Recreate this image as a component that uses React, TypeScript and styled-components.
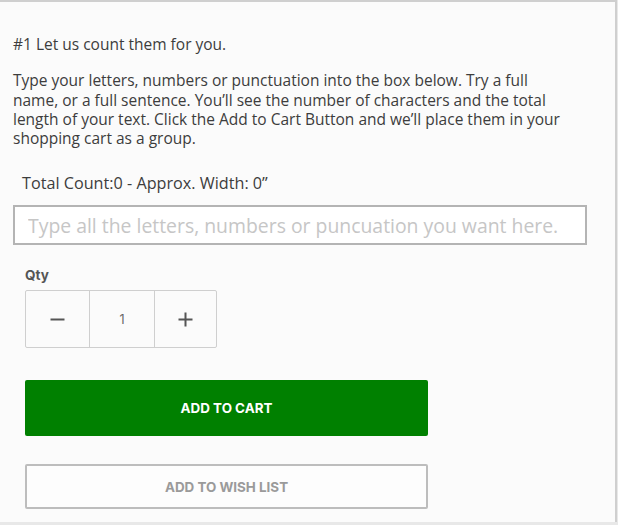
import * as React from "react";
import styled, { createGlobalStyle } from "styled-components";

const GlobalStyle = createGlobalStyle`
  html, body {
    margin: 0;
    padding: 0;
    background: #e8e8e8;
  }
  * {
    box-sizing: border-box;
  }
`;

const Panel = styled.div`
  background: #fbfbfb;
  border-right: 2px solid #cfcfcf;
  border-top: 2px solid #cfcfcf;
  display: flex;
  flex-direction: column;
  font-family: "Open Sans", "Noto Sans", sans-serif;
  height: 522px;
  padding: 33px 0 0 13px;
  width: 617px;
`;

const Paragraph = styled.p<{ $gap?: number }>`
  color: #3d3d3d;
  font-size: 15.5px;
  line-height: 19.3px;
  margin: 0 0 ${(p) => p.$gap ?? 0}px;
  white-space: nowrap;
`;

const CountLine = styled.div`
  color: #3d3d3d;
  font-size: 16.2px;
  line-height: 19px;
  margin: 26px 0 12px 9px;
`;

const TextInput = styled.input`
  background: #fff;
  border: 2px solid #b4b4b4;
  color: #333;
  font-family: "Open Sans", "Noto Sans", sans-serif;
  font-size: 19.4px;
  height: 40px;
  outline: none;
  padding: 0 13px;
  width: 574px;

  &::placeholder {
    color: #c6c6c6;
  }
`;

const Controls = styled.div`
  display: flex;
  flex-direction: column;
  padding-left: 12px;
`;

const QtyLabel = styled.label`
  color: #555;
  font-family: "Inter", "Liberation Sans", sans-serif;
  font-size: 13.5px;
  font-weight: 700;
  line-height: 16px;
  margin: 22px 0 7px;
`;

const Stepper = styled.div`
  border: 1px solid #cfcfcf;
  border-radius: 2px;
  display: grid;
  grid-template-columns: 63px 65px 62px;
  height: 58px;
  width: 192px;
`;

const StepCell = styled.div<{ $divider?: boolean }>`
  align-items: center;
  border-left: ${(p) => (p.$divider ? "1px solid #cfcfcf" : "none")};
  color: #444;
  display: flex;
  font-family: "Inter", "Liberation Sans", sans-serif;
  justify-content: center;
`;

const QtyValue = styled.span`
  color: #666;
  font-size: 12.5px;
`;

const ActionButton = styled.button<{ $primary?: boolean }>`
  background: ${(p) => (p.$primary ? "#008000" : "#fdfdfd")};
  border: ${(p) => (p.$primary ? "none" : "2px solid #bdbdbd")};
  border-radius: 2px;
  color: ${(p) => (p.$primary ? "#fff" : "#9a9a9a")};
  font-family: "Inter", "Liberation Sans", sans-serif;
  font-size: 13.4px;
  font-weight: 700;
  height: ${(p) => (p.$primary ? 56 : 45)}px;
  margin-top: ${(p) => (p.$primary ? 32 : 28)}px;
  text-transform: uppercase;
  width: 403px;
`;

const Minus = () => (
  <svg width="15" height="15" viewBox="0 0 15 15">
    <path d="M0.5 7.5h14" stroke="#555" strokeWidth="2" />
  </svg>
);

const Plus = () => (
  <svg width="15" height="15" viewBox="0 0 15 15">
    <path d="M0.5 7.5h14M7.5 0.5v14" stroke="#555" strokeWidth="2" />
  </svg>
);

export default function App() {
  const [text, setText] = React.useState("");
  const [qty, setQty] = React.useState(1);

  return (
    <>
      <GlobalStyle />
      <Panel>
        <Paragraph $gap={17}>#1 Let us count them for you.</Paragraph>
        <Paragraph>
          Type your letters, numbers or punctuation into the box below. Try a full
          <br />
          name, or a full sentence. You’ll see the number of characters and the total
          <br />
          length of your text. Click the Add to Cart Button and we’ll place them in your
          <br />
          shopping cart as a group.
        </Paragraph>
        <CountLine>
          Total Count:{text.length} - Approx. Width: 0”
        </CountLine>
        <TextInput
          value={text}
          onChange={(event) => setText(event.target.value)}
          placeholder="Type all the letters, numbers or puncuation you want here."
        />
        <Controls>
          <QtyLabel>Qty</QtyLabel>
          <Stepper>
            <StepCell onClick={() => setQty(Math.max(1, qty - 1))}>
              <Minus />
            </StepCell>
            <StepCell $divider>
              <QtyValue>{qty}</QtyValue>
            </StepCell>
            <StepCell $divider onClick={() => setQty(qty + 1)}>
              <Plus />
            </StepCell>
          </Stepper>
          <ActionButton $primary>Add to Cart</ActionButton>
          <ActionButton>Add to Wish List</ActionButton>
        </Controls>
      </Panel>
    </>
  );
}
